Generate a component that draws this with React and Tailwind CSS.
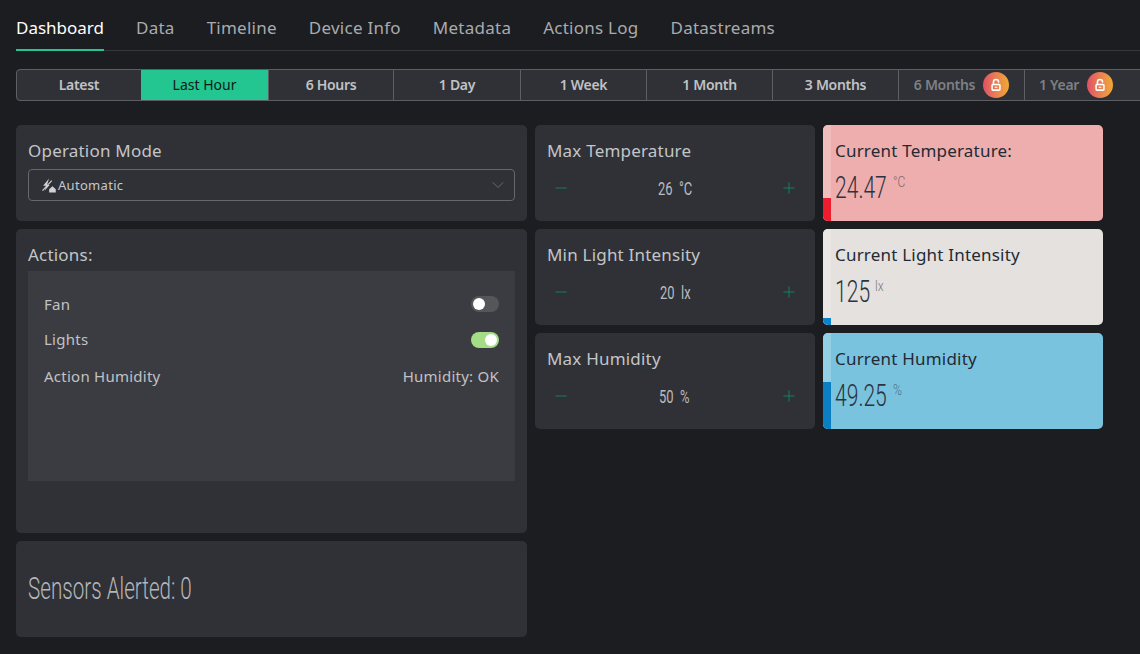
import React from "react";
import { ChevronDown, Minus, Plus } from "lucide-react";

const ui = "font-['Noto_Sans','Open_Sans',sans-serif]";
const cond = "font-['Roboto',sans-serif] font-light";

const tabs = ["Dashboard", "Data", "Timeline", "Device Info", "Metadata", "Actions Log", "Datastreams"];
const ranges = ["Latest", "Last Hour", "6 Hours", "1 Day", "1 Week", "1 Month", "3 Months", "6 Months", "1 Year"];
const rangeWidths = ["w-[124px]", "w-[127px]", "w-[125px]", "w-[127px]", "w-[126px]", "w-[126px]", "w-[126px]", "w-[126px]", "w-[126px]"];

function Card({ className = "", children }) {
  return <div className={`rounded-[5px] bg-[#303136] px-3 pt-[14px] ${className}`}>{children}</div>;
}

function Title({ children }) {
  return <div className="text-[17px] leading-[24px] tracking-[0.2px] text-[#c3c5c8]">{children}</div>;
}

function Stepper({ title, value, unit, width }) {
  return (
    <Card>
      <Title>{title}</Title>
      <div className="mt-[9px] flex h-[32px] items-center justify-between px-[5px] text-[#0f8a60]">
        <Minus size={18} strokeWidth={1.2} />
        <span className={`${cond} ${width} inline-block origin-left scale-x-[0.72] whitespace-nowrap text-[18px] font-normal text-[#b9bbbe]`}>{value}&nbsp;&nbsp;{unit}</span>
        <Plus size={18} strokeWidth={1.2} />
      </div>
    </Card>
  );
}

function Stat({ title, value, unit, bg, rail, fill, fillHeight, width }) {
  return (
    <div className={`relative overflow-hidden rounded-[5px] pl-3 pr-3 pt-[14px] ${bg}`}>
      <div className={`absolute bottom-0 left-0 top-0 w-[8px] ${rail}`}>
        <div className={`absolute bottom-0 left-0 w-full ${fill} ${fillHeight}`} />
      </div>
      <div className="text-[17px] leading-[24px] tracking-[0.2px] text-[#232a33]">{title}</div>
      <div className={`mt-[7px] flex items-start ${cond} text-[#2c3340]`}>
        <span className={`${width} inline-block origin-left scale-x-[0.68] whitespace-nowrap text-[31px] leading-[36px]`}>{value}</span>
        <span className="ml-[5px] mt-[4px] inline-block origin-left scale-x-[0.8] whitespace-nowrap text-[15px] leading-[16px] opacity-60">{unit}</span>
      </div>
    </div>
  );
}

function Toggle({ on }) {
  return (
    <div className={`flex h-[16px] w-[28px] items-center rounded-full px-[2px] ${on ? "justify-end bg-[#a5dc86]" : "justify-start bg-[#55565a]"}`}>
      <div className="h-[12px] w-[12px] rounded-full bg-white" />
    </div>
  );
}

function AutoIcon() {
  return (
    <svg width="15" height="15" viewBox="0 0 14 14" fill="#d0d2d5">
      <path d="M7.5 0.5 2 7.2h2.9L3.3 12 8 6.6H5.6L7.5 0.5Z" />
      <path d="M9.6 2 1 11.4l.8.7L10.4 2.7z" />
      <path d="M10.7 7.6 13.8 10.4V13.6H7.6V10.4z" />
    </svg>
  );
}

function LockIcon() {
  return (
    <svg width="12" height="14" viewBox="0 0 14 16" fill="none">
      <path d="M4 7.5V4.5a3 3 0 0 1 6 0" stroke="#fff" strokeWidth="1.8" strokeLinecap="round" />
      <rect x="2.4" y="7.4" width="9.2" height="6.6" rx="1" stroke="#fff" strokeWidth="1.8" />
      <path d="M5.5 10.7h3" stroke="#fff" strokeWidth="1.4" />
    </svg>
  );
}

export default function App() {
  return (
    <div className={`${ui} h-[654px] w-[1140px] overflow-hidden bg-[#1c1d21]`}>
      <nav className="ml-4 flex h-[51px] gap-8 border-b border-[#37383c]">
        {tabs.map((t, i) => (
          <div
            key={t}
            className={`relative flex h-[51px] items-center pt-[5px] text-[17px] ${i === 0 ? "text-white" : "tracking-[0.25px] text-[#a9abae]"}`}
          >
            {t}
            {i === 0 && <div className="absolute bottom-0 left-0 right-0 h-[2px] bg-[#23c690]" />}
          </div>
        ))}
      </nav>

      <div className="ml-4 mt-[18px] flex h-[32px] w-[1140px] rounded-[4px] border border-[#5d5e62] bg-[#303136]">
        {ranges.map((r, i) => {
          const locked = i > 6;
          return (
            <div
              key={r}
              className={`flex ${rangeWidths[i]} shrink-0 items-center justify-center gap-2 pb-[1px] text-[14px] ${i === 0 ? "" : "border-l border-[#5d5e62]"} ${
                i === 1
                  ? "border-l-0 bg-[#23c690] font-normal text-[#0d1b16]"
                  : locked
                  ? "font-semibold tracking-[-0.3px] text-[#7d8085]"
                  : "font-semibold tracking-[-0.3px] text-[#c0c2c5]"
              } ${i === 8 ? "justify-start pl-[14px]" : ""}`}
            >
              {r}
              {locked && (
                <span className="flex h-[26px] w-[26px] shrink-0 items-center justify-center rounded-full bg-gradient-to-r from-[#df4f63] to-[#f0a92e]">
                  <LockIcon />
                </span>
              )}
            </div>
          );
        })}
      </div>

      <main className="ml-4 mt-[24px] grid grid-cols-[511px_280px_280px] auto-rows-[96px] gap-2">
        <Card>
          <Title>Operation Mode</Title>
          <div className="mt-[6px] flex h-[32px] items-center justify-between rounded-[4px] border border-[#66676b] pl-3 pr-[6px] text-[13px] tracking-[0.3px] text-[#c5c7ca]">
            <span className="flex items-center gap-[2px] pt-[1px]"><AutoIcon />Automatic</span>
            <ChevronDown size={20} strokeWidth={0.8} className="text-[#85878a]" />
          </div>
        </Card>
        <Stepper title="Max Temperature" value="26" unit="°C" width="w-[35px]" />
        <Stat title="Current Temperature:" value="24.47" unit="°C" width="w-[53px]" bg="bg-[#eeaeae]" rail="bg-[#f1bcbc]" fill="bg-[#ed1c2e]" fillHeight="h-[23px]" />

        <Card className="row-span-3">
          <Title>Actions:</Title>
          <div className="mt-[4px] h-[210px] bg-[#3b3c41] px-4 pt-[21px] text-[15px] tracking-[0.25px] text-[#c0c2c5]">
            <div className="flex h-[24px] items-center justify-between"><span>Fan</span><Toggle /></div>
            <div className="mt-3 flex h-[24px] items-center justify-between"><span className="-mt-[1px]">Lights</span><Toggle on /></div>
            <div className="mt-3 flex h-[24px] items-center justify-between"><span>Action Humidity</span><span>Humidity: OK</span></div>
          </div>
        </Card>
        <Stepper title="Min Light Intensity" value="20" unit="lx" width="w-[30px]" />
        <Stat title="Current Light Intensity" value="125" unit="lx" width="w-[35px]" bg="bg-[#e5e1de]" rail="bg-[#e9e6e3]" fill="bg-[#0a84cc]" fillHeight="h-[7px]" />

        <Stepper title="Max Humidity" value="50" unit="%" width="w-[32px]" />
        <Stat title="Current Humidity" value="49.25" unit="%" width="w-[53px]" bg="bg-[#79c3de]" rail="bg-[#94d0e5]" fill="bg-[#0a7fc4]" fillHeight="h-[47px]" />

        <div className="col-span-2 col-start-2" />

        <div className="col-start-1 flex items-center rounded-[5px] bg-[#303136] px-3">
          <span className={`${cond} inline-block w-[164px] origin-left scale-x-[0.665] whitespace-nowrap text-[31px] text-[#b4b6ba]`}>Sensors Alerted: 0</span>
        </div>
      </main>
    </div>
  );
}
